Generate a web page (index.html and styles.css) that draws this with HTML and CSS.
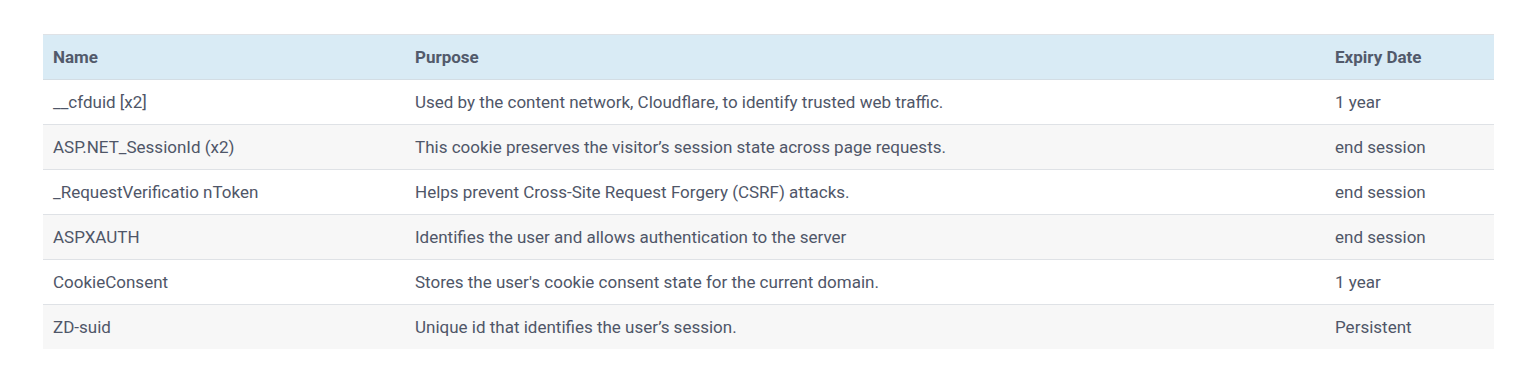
FILE: index.html
```html
<!DOCTYPE html>
<html lang="en">
<head>
    <meta charset="UTF-8">
    <title>Cookies</title>
    <link rel="stylesheet" href="styles.css">
</head>
<body>
    <div class="wrap">
        <table class="cookies">
            <thead>
                <tr>
                    <th class="col-name">Name</th>
                    <th class="col-purpose">Purpose</th>
                    <th class="col-expiry">Expiry Date</th>
                </tr>
            </thead>
            <tbody>
                <tr>
                    <td>__cfduid [x2]</td>
                    <td>Used by the content network, Cloudflare, to identify trusted web traffic.</td>
                    <td>1 year</td>
                </tr>
                <tr>
                    <td>ASP.NET_SessionId (x2)</td>
                    <td>This cookie preserves the visitor’s session state across page requests.</td>
                    <td>end session</td>
                </tr>
                <tr>
                    <td>_RequestVerificatio nToken</td>
                    <td>Helps prevent Cross-Site Request Forgery (CSRF) attacks.</td>
                    <td>end session</td>
                </tr>
                <tr>
                    <td>ASPXAUTH</td>
                    <td>Identifies the user and allows authentication to the server</td>
                    <td>end session</td>
                </tr>
                <tr>
                    <td>CookieConsent</td>
                    <td>Stores the user's cookie consent state for the current domain.</td>
                    <td>1 year</td>
                </tr>
                <tr>
                    <td>ZD-suid</td>
                    <td>Unique id that identifies the user’s session.</td>
                    <td>Persistent</td>
                </tr>
            </tbody>
        </table>
    </div>
</body>
</html>
```

FILE: styles.css
```css
body {
    margin: 0;
    background-color: #ffffff;
    font-family: Roboto, "Liberation Sans", sans-serif;
    color: #4f5668;
}
.wrap {
    padding: 34px 42px 0 43px;
}
.cookies {
    width: 100%;
    border-collapse: collapse;
    font-size: 17px;
}
.cookies th,
.cookies td {
    text-align: left;
    padding: 0 10px;
    height: 44px;
    border-top: 1px solid #dfe2e6;
    vertical-align: middle;
}
.cookies th {
    background-color: #d9ebf5;
    font-weight: 700;
    color: #525a6b;
    border-bottom: 1px solid #d3dde4;
}
.cookies tbody tr:nth-child(even) td {
    background-color: #f7f7f7;
}
.col-name {
    width: 342px;
}
.col-purpose {
    width: 900px;
}
```
